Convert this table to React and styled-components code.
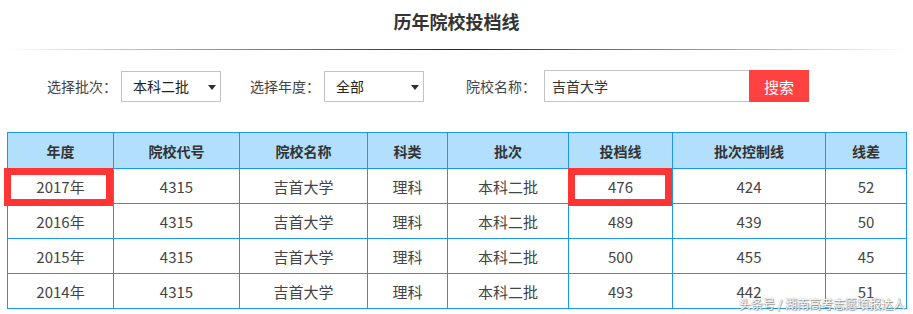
import React from "react";
import styled, { createGlobalStyle } from "styled-components";

const GlobalStyle = createGlobalStyle`
  body {
    margin: 0;
    background: #fff;
    font-family: "Noto Sans CJK SC", "Noto Sans", sans-serif;
    color: #444;
  }
`;

const Page = styled.div`
  position: relative;
  width: 913px;
  height: 314px;
  overflow: hidden;
`;

const Title = styled.h2`
  margin: 0;
  height: 49px;
  padding-top: 8px;
  box-sizing: border-box;
  text-align: center;
  font-size: 18px;
  line-height: 26px;
  font-weight: bold;
  color: #333;
`;

const Divider = styled.div`
  height: 1px;
  margin: 0 6px;
  background: linear-gradient(
    to right,
    rgba(0, 0, 0, 0),
    rgba(0, 0, 0, 0.45) 25%,
    rgba(0, 0, 0, 0.85) 50%,
    rgba(0, 0, 0, 0.45) 75%,
    rgba(0, 0, 0, 0)
  );
`;

const Filters = styled.div`
  display: flex;
  align-items: center;
  height: 32px;
  margin-top: 20px;
  padding-left: 47px;
`;

const Label = styled.span`
  margin-left: ${(p) => p.$ml || 0}px;
  margin-right: ${(p) => p.$mr || 4}px;
  font-size: 14px;
  color: #444;
  white-space: nowrap;
`;

const Select = styled.div`
  display: flex;
  align-items: center;
  justify-content: space-between;
  width: 100px;
  height: 31px;
  box-sizing: border-box;
  padding: 0 4px 0 11px;
  border: 1px solid #c2c2c2;
  font-size: 14px;
  color: #222;
`;

const Caret = styled.span`
  width: 0;
  height: 0;
  margin-top: 2px;
  border-left: 4.5px solid transparent;
  border-right: 4.5px solid transparent;
  border-top: 5px solid #2e2e3a;
`;

const SearchBox = styled.div`
  display: flex;
  height: 32px;
`;

const Input = styled.div`
  display: flex;
  align-items: center;
  width: 205px;
  box-sizing: border-box;
  padding-left: 7px;
  border: 1px solid #c4c4c4;
  border-right: none;
  font-size: 14px;
  color: #333;
`;

const SearchButton = styled.button`
  width: 60px;
  border: none;
  padding: 0;
  background: #ff4141;
  color: #fff;
  font-family: inherit;
  font-size: 15px;
`;

const Table = styled.table`
  margin: 30px 0 0 7px;
  width: 899px;
  border-collapse: collapse;
  table-layout: fixed;
`;

const Th = styled.th`
  height: 35px;
  padding: 0;
  border: 1px solid #1b97ef;
  background: #b2e0fc;
  font-size: 14px;
  font-weight: bold;
  color: #333;
`;

const Td = styled.td`
  position: relative;
  height: 34px;
  padding: 0;
  border: 1px solid #1b97ef;
  text-align: center;
  font-size: 15px;
  color: #444;
`;

const Highlight = styled.span`
  position: absolute;
  left: ${(p) => p.$left}px;
  right: 0;
  top: -1px;
  bottom: -3px;
  border: 7px solid #ff3434;
  pointer-events: none;
`;

const Watermark = styled.div`
  position: absolute;
  right: 8px;
  bottom: 2px;
  font-size: 12px;
  color: #fff;
  text-shadow: 0 0 1px #777, 1px 1px 1px #888;
`;

const columns = [
  { title: "年度", width: 106 },
  { title: "院校代号", width: 126 },
  { title: "院校名称", width: 128 },
  { title: "科类", width: 80 },
  { title: "批次", width: 121 },
  { title: "投档线", width: 104 },
  { title: "批次控制线", width: 153 },
  { title: "线差", width: 81 },
];

const rows = [
  ["2017年", "4315", "吉首大学", "理科", "本科二批", "476", "424", "52"],
  ["2016年", "4315", "吉首大学", "理科", "本科二批", "489", "439", "50"],
  ["2015年", "4315", "吉首大学", "理科", "本科二批", "500", "455", "45"],
  ["2014年", "4315", "吉首大学", "理科", "本科二批", "493", "442", "51"],
];

// marked cells in the first row: column index -> left offset of the frame
const marked = { 0: -4, 5: -1 };

export default function App() {
  return (
    <Page>
      <GlobalStyle />
      <Title>历年院校投档线</Title>
      <Divider />
      <Filters>
        <Label>选择批次：</Label>
        <Select>
          本科二批
          <Caret />
        </Select>
        <Label $ml={29}>选择年度：</Label>
        <Select>
          全部
          <Caret />
        </Select>
        <Label $ml={42} $mr={8}>
          院校名称：
        </Label>
        <SearchBox>
          <Input>吉首大学</Input>
          <SearchButton>搜索</SearchButton>
        </SearchBox>
      </Filters>
      <Table>
        <colgroup>
          {columns.map((c) => (
            <col key={c.title} style={{ width: c.width }} />
          ))}
        </colgroup>
        <thead>
          <tr>
            {columns.map((c) => (
              <Th key={c.title}>{c.title}</Th>
            ))}
          </tr>
        </thead>
        <tbody>
          {rows.map((row, r) => (
            <tr key={row[0]}>
              {row.map((cell, i) => (
                <Td key={i}>
                  {cell}
                  {r === 0 && marked[i] !== undefined && (
                    <Highlight $left={marked[i]} />
                  )}
                </Td>
              ))}
            </tr>
          ))}
        </tbody>
      </Table>
      <Watermark>头条号 / 湖南高考志愿填报达人</Watermark>
    </Page>
  );
}
